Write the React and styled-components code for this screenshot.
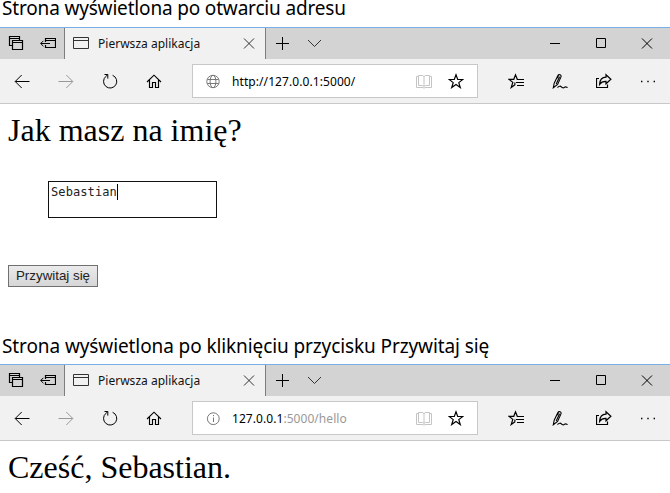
import React from "react";
import styled, { createGlobalStyle } from "styled-components";

const GlobalStyle = createGlobalStyle`
  * { box-sizing: border-box; }
  body { margin: 0; background: #fff; color: #000; overflow: hidden; }
`;

const UI_FONT = `"Noto Sans", "Open Sans", sans-serif`;

const Page = styled.main`
  width: 670px;
  height: 493px;
  display: flex;
  flex-direction: column;
`;

const Figure = styled.section`
  height: ${(p) => p.$height}px;
  flex: none;
  display: flex;
  flex-direction: column;
`;

const Caption = styled.h2`
  margin: 0;
  height: 27px;
  padding: ${(p) => p.$top || 0}px 0 0 2px;
  font: 400 19px/16px ${UI_FONT};
  letter-spacing: ${(p) => p.$spacing}px;
  white-space: nowrap;
`;

const Browser = styled.div`
  border-top: 1px solid #78b0e6;
  flex: none;
`;

const TabBar = styled.div`
  display: flex;
  height: 31px;
  background: #d3d3d3;
`;

const Cell = styled.button`
  width: ${(p) => p.$width}px;
  height: 100%;
  padding: 0;
  border: 0;
  background: none;
  color: ${(p) => p.$color || "#000"};
  display: flex;
  align-items: center;
  justify-content: center;
  flex: none;
`;

const Tab = styled.div`
  width: 202px;
  border: solid #7d7d7d;
  border-width: 0 1px;
  background: #f1f1f1;
  color: #333;
  display: flex;
  align-items: center;
  padding: 0 8px;
`;

const TabTitle = styled.span`
  flex: 1;
  margin-left: 9px;
  font: 12px/16px ${UI_FONT};
  letter-spacing: 0.02px;
  color: #111;
  white-space: nowrap;
`;

const Spacer = styled.div`
  flex: 1;
`;

const Toolbar = styled.div`
  display: flex;
  align-items: center;
  height: 45px;
  background: #f1f1f1;
  border-bottom: 1px solid #c8c8c8;
`;

const AddressBar = styled.div`
  flex: 1;
  height: 34px;
  margin: 0 16px;
  padding: 0 13px 0 12px;
  background: #fff;
  border: 1px solid #c8c8c8;
  display: flex;
  align-items: center;
`;

const Url = styled.span`
  flex: 1;
  margin-left: 11px;
  padding-top: 2px;
  font: 12px/16px ${UI_FONT};
  letter-spacing: ${(p) => p.$spacing}px;
  color: #000;
  white-space: nowrap;
`;

const Dim = styled.span`
  color: #999;
`;

const FavouriteSlot = styled.span`
  display: flex;
  margin-left: 16px;
`;

const Document = styled.div`
  padding: 8px 8px 0;
  display: flex;
  flex-direction: column;
  align-items: flex-start;
`;

const Heading = styled.h1`
  margin: 0;
  font: 400 32px/36px "Liberation Serif", serif;
  white-space: nowrap;
`;

const NameField = styled.div`
  width: 169px;
  height: 37px;
  margin: 33px 0 47px 40px;
  padding: 2px;
  border: 1px solid #111;
  display: flex;
  font: 12px/16px "DejaVu Sans Mono", monospace;
  letter-spacing: 0.1px;
  color: #222;
`;

const Caret = styled.span`
  width: 1px;
  height: 16px;
  background: #000;
`;

const SubmitButton = styled.button`
  width: 90px;
  height: 22px;
  padding: 0;
  border: 1px solid #707070;
  background: linear-gradient(#ebebeb, #d6d6d6);
  font: 13.33px/18px "Liberation Sans", Arial, sans-serif;
  color: #222;
  white-space: nowrap;
`;

const Glyph = styled.svg`
  width: 16px;
  height: ${(p) => p.$h}px;
  flex: none;
  fill: none;
  stroke: currentColor;
  stroke-width: 1;
`;

const Icon = ({ h = 16, children }) => (
  <Glyph $h={h} viewBox={`0 0 16 ${h}`} aria-hidden="true">
    {children}
  </Glyph>
);

const STAR = "M8 1.8L9.7 6.5H14.8L10.8 9.6L12.3 14.6L8 11.6L3.7 14.6L5.2 9.6L1.2 6.5H6.3Z";

const TabsAsideIcon = () => (
  <Icon h={17}>
    <path d="M4 10.5H1.5V1.5H11.5V5M1.5 3.5H11.5" strokeWidth="1.2" />
    <path d="M4.5 5.5H14.5V14.5H4.5ZM4.5 7.5H14.5" strokeWidth="1.2" />
  </Icon>
);
const SetAsideIcon = () => (
  <Icon h={17}>
    <path d="M5.5 7V3.5H15.5V12.5H5.5V10M5.5 5.5H15.5" strokeWidth="1.2" />
    <path d="M.7 8.5H10M3.4 5.8L.7 8.5l2.7 2.7" />
  </Icon>
);
const PageIcon = () => (
  <Icon h={17}>
    <path d="M.5 2.5H15.5V13.5H.5ZM.5 5.5H15.5" />
  </Icon>
);
const CloseIcon = () => (
  <Icon h={17}>
    <path d="M3 3.5L13 13.5M13 3.5L3 13.5" />
  </Icon>
);
const PlusIcon = () => (
  <Icon h={17}>
    <path d="M8.5 2V15M2 8.5H15" />
  </Icon>
);
const ChevronIcon = () => (
  <Icon h={17}>
    <path d="M2 5L8.5 11.5L15 5" />
  </Icon>
);
const MinimizeIcon = () => (
  <Icon h={17}>
    <path d="M3 8.5H13" />
  </Icon>
);
const MaximizeIcon = () => (
  <Icon h={17}>
    <path d="M3.5 3.5H12.5V12.5H3.5Z" />
  </Icon>
);
const BackIcon = () => (
  <Icon>
    <path d="M1.3 8.5H15.5M7.7 2L1.2 8.5L7.7 15" />
  </Icon>
);
const ForwardIcon = () => (
  <Icon>
    <path d="M.5 8.5H14.7M8.3 2L14.8 8.5L8.3 15" />
  </Icon>
);
const RefreshIcon = () => (
  <Icon>
    <path d="M10.6 2.3A6.6 6.6 0 1 1 4 3.3L5.5 1.8M2.5 1.5H5.8V5.6" />
  </Icon>
);
const HomeIcon = () => (
  <Icon>
    <path d="M1 9L8 2.2L15 9M3.5 7V14.5H6.5V9.5H9.5V14.5H12.5V7" strokeWidth="1.15" />
  </Icon>
);
const GlobeIcon = () => (
  <Icon>
    <circle cx="8" cy="8.5" r="6.2" />
    <ellipse cx="8" cy="8.5" rx="2.9" ry="6.2" />
    <path d="M2.5 6.5H13.5M2.5 10.5H13.5" />
  </Icon>
);
const InfoIcon = () => (
  <Icon>
    <circle cx="8.3" cy="8.7" r="5.9" />
    <path d="M8.5 7.5V12M8.5 5V6.2" />
  </Icon>
);
const BookIcon = () => (
  <Icon>
    <path d="M2.5 2.5H6.5L8 3.5L9.5 2.5H13.5V12.5H9.5L8 13.5L6.5 12.5H2.5ZM8 3.5V13" />
    <path d="M2.5 3.5H.5V14.5H7L8 15.3L9 14.5H15.5V3.5H13.5" />
  </Icon>
);
const StarIcon = () => (
  <Icon>
    <path d={STAR} strokeWidth="1.2" />
  </Icon>
);
const FavouritesIcon = () => (
  <Icon>
    <path d="M9.8 6.3H9.3L7.5 1.8L5.8 6.3H.9L4.8 9.4L3.2 14.5L7 11.7M7 11.7L6.8 9.5" strokeWidth="1.2" />
    <path d="M9 6.5H16M8 9.5H16M9 12.5H16" strokeWidth="1.2" />
  </Icon>
);
const PenIcon = () => (
  <Icon>
    <path d="M1.3 14.8L2.2 10.2L5.8 2.7C6.8 .7 9.8 1.8 8.9 4.1L5.6 11.5L1.3 14.8ZM5.3 5.2L6.5 2.5M4.2 11L7.6 3.8" strokeWidth="1.1" />
    <path d="M5.5 14.6C7 12.8 8.6 12.9 9.4 13.8S11.3 15.4 12.4 14.3S14.2 14 15.6 14.6" strokeWidth="1.1" />
  </Icon>
);
const ShareIcon = () => (
  <Icon>
    <path d="M3 5.5H.5V14.5H11.5V11.5" strokeWidth="1.2" />
    <path d="M10 1.7L14.9 6.3L10 10.8V8.3C7 8.2 5.1 9 3.6 11.3C3.8 7 6.3 4.3 10 4.2Z" strokeWidth="1.2" />
  </Icon>
);
const MoreIcon = () => (
  <Icon>
    <path d="M1 8.5h1.4M7.3 8.5h1.4M13.6 8.5h1.4" strokeWidth="1.4" />
  </Icon>
);

const BrowserChrome = ({ siteIcon, urlSpacing, children }) => (
  <Browser>
    <TabBar>
      <Cell $width={32}><TabsAsideIcon /></Cell>
      <Cell $width={32}><SetAsideIcon /></Cell>
      <Tab>
        <PageIcon />
        <TabTitle>Pierwsza aplikacja</TabTitle>
        <CloseIcon />
      </Tab>
      <Cell $width={32}><PlusIcon /></Cell>
      <Cell $width={32} $color="#333"><ChevronIcon /></Cell>
      <Spacer />
      <Cell $width={46}><MinimizeIcon /></Cell>
      <Cell $width={46}><MaximizeIcon /></Cell>
      <Cell $width={46}><CloseIcon /></Cell>
    </TabBar>
    <Toolbar>
      <Cell $width={44}><BackIcon /></Cell>
      <Cell $width={44} $color="#999"><ForwardIcon /></Cell>
      <Cell $width={44}><RefreshIcon /></Cell>
      <Cell $width={44}><HomeIcon /></Cell>
      <AddressBar>
        <Cell as="span" $width={16} $color="#777">{siteIcon}</Cell>
        <Url $spacing={urlSpacing}>{children}</Url>
        <Cell as="span" $width={16} $color="#c4c4c4"><BookIcon /></Cell>
        <FavouriteSlot><StarIcon /></FavouriteSlot>
      </AddressBar>
      <Cell $width={44}><FavouritesIcon /></Cell>
      <Cell $width={44}><PenIcon /></Cell>
      <Cell $width={44}><ShareIcon /></Cell>
      <Cell $width={44}><MoreIcon /></Cell>
    </Toolbar>
  </Browser>
);

export default function App() {
  return (
    <>
      <GlobalStyle />
      <Page>
        <Figure $height={337}>
          <Caption $spacing={-0.17}>Strona wyświetlona po otwarciu adresu</Caption>
          <BrowserChrome siteIcon={<GlobeIcon />} urlSpacing={0.08}>
            http://127.0.0.1:5000/
          </BrowserChrome>
          <Document>
            <Heading>Jak masz na imię?</Heading>
            <NameField>Sebastian<Caret /></NameField>
            <SubmitButton>Przywitaj się</SubmitButton>
          </Document>
        </Figure>
        <Figure $height={156}>
          <Caption $spacing={-0.1} $top={1}>Strona wyświetlona po kliknięciu przycisku Przywitaj się</Caption>
          <BrowserChrome siteIcon={<InfoIcon />} urlSpacing={0.06}>
            127.0.0.1<Dim>:5000/hello</Dim>
          </BrowserChrome>
          <Document>
            <Heading>Cześć, Sebastian.</Heading>
          </Document>
        </Figure>
      </Page>
    </>
  );
}
